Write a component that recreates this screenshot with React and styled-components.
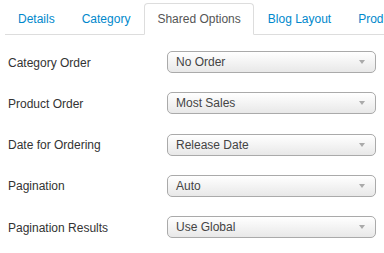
import React from 'react';
import styled, { createGlobalStyle } from 'styled-components';

const GlobalStyle = createGlobalStyle`
  html, body {
    margin: 0;
    padding: 0;
    background: #fff;
  }
  body {
    font-family: "Liberation Sans", Arial, sans-serif;
    font-size: 12px;
    color: #333;
  }
`;

const Page = styled.div`
  width: 384px;
  height: 253px;
  overflow: hidden;
  padding: 3px 0 0 5px;
  box-sizing: border-box;
`;

const TabBar = styled.ul`
  display: flex;
  list-style: none;
  margin: 0;
  padding: 0;
  border-bottom: 1px solid #ddd;
  white-space: nowrap;
`;

const Tab = styled.li`
  margin-right: 1px;
  margin-bottom: -1px;
  padding: 6px 12px 5px;
  line-height: 19px;
  border: 1px solid ${p => (p.$active ? '#ddd' : 'transparent')};
  border-bottom-color: ${p => (p.$active ? '#fff' : 'transparent')};
  border-radius: 4px 4px 0 0;
  background: ${p => (p.$active ? '#fff' : 'transparent')};
  color: ${p => (p.$active ? '#555' : '#0088cc')};
  font-size: 12px;
`;

const Form = styled.div`
  display: grid;
  grid-template-columns: 159px 209px;
  row-gap: 19.25px;
  align-items: center;
  padding: 16px 0 0 3px;
`;

const Label = styled.div`
  font-size: 12px;
  color: #333;
  padding-top: 1px;
`;

const Select = styled.div`
  position: relative;
  height: 22px;
  box-sizing: border-box;
  border: 1px solid #aaa;
  border-radius: 5px;
  background: linear-gradient(to bottom, #ffffff 0%, #f6f6f6 40%, #e8e8e8 100%);
  padding: 0 0 0 8px;
  line-height: 20px;
  font-size: 12px;
  color: #444;
`;

const Arrow = styled.span`
  position: absolute;
  right: 10px;
  top: 8px;
  width: 0;
  height: 0;
  border-left: 3px solid transparent;
  border-right: 3px solid transparent;
  border-top: 4px solid #aaa;
`;

const tabs = ['Details', 'Category', 'Shared Options', 'Blog Layout', 'Product Layout'];

const fields = [
  ['Category Order', 'No Order'],
  ['Product Order', 'Most Sales'],
  ['Date for Ordering', 'Release Date'],
  ['Pagination', 'Auto'],
  ['Pagination Results', 'Use Global'],
];

export default function App() {
  return (
    <Page>
      <GlobalStyle />
      <TabBar>
        {tabs.map(t => (
          <Tab key={t} $active={t === 'Shared Options'}>{t}</Tab>
        ))}
      </TabBar>
      <Form>
        {fields.map(([label, value]) => (
          <React.Fragment key={label}>
            <Label>{label}</Label>
            <Select>
              {value}
              <Arrow />
            </Select>
          </React.Fragment>
        ))}
      </Form>
    </Page>
  );
}
